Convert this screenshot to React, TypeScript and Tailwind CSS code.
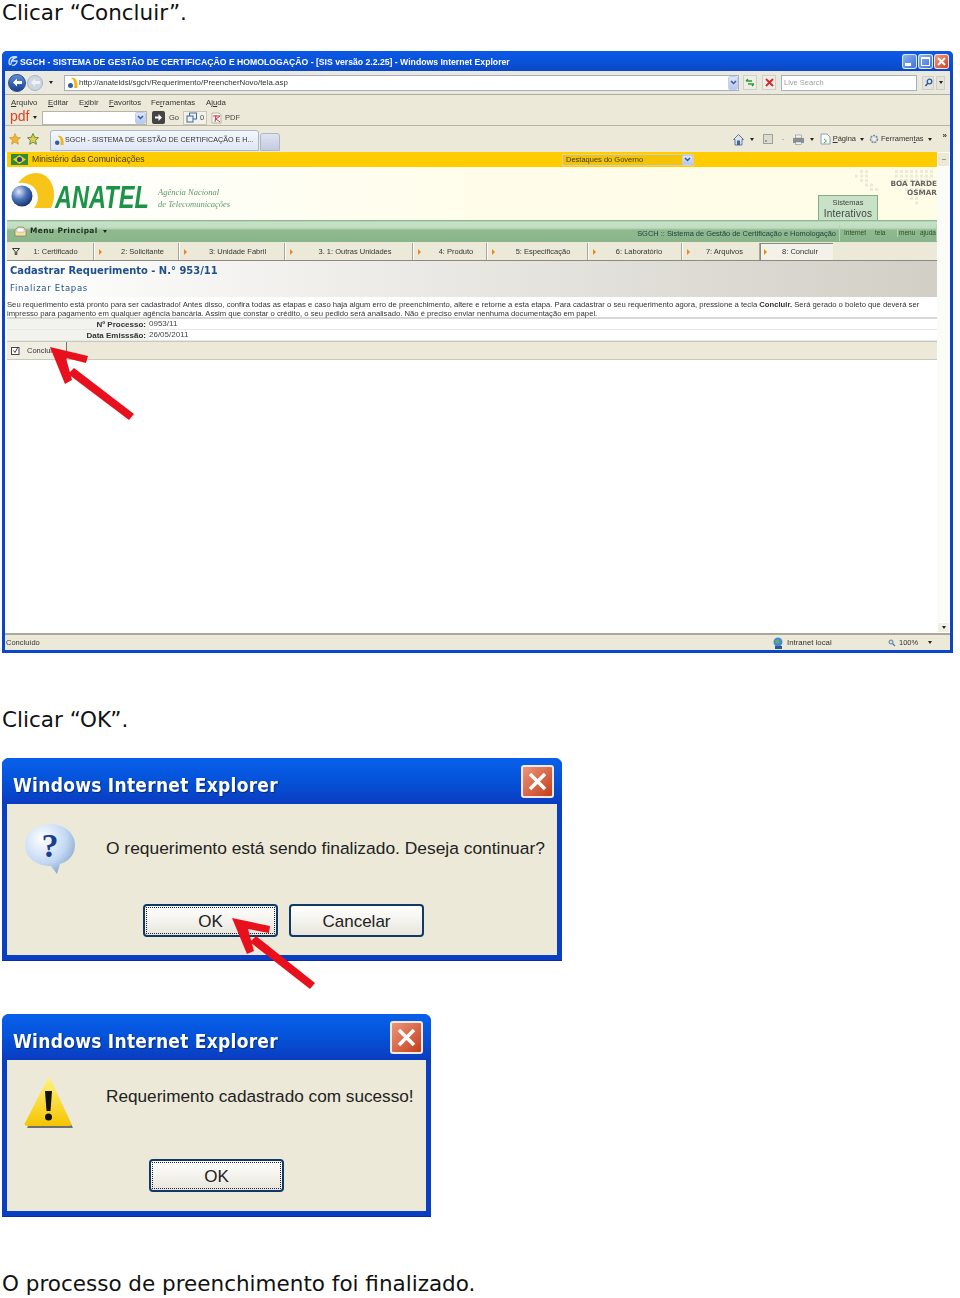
const ui = { fontFamily: '"Liberation Sans", Arial, sans-serif' };

function RedArrow({ className, width, height, points, shaft }: { className: string; width: number; height: number; points: string; shaft: string }) {
	return (
		<svg className={className} width={width} height={height} viewBox={`0 0 ${width} ${height}`}>
			<polygon points={points} fill="#e8101c" />
			<polygon points={shaft} fill="#e8101c" />
		</svg>
	);
}

function LogoIcon({ size = 12 }: { size?: number }) {
	return (
		<svg width={size} height={size} viewBox="0 0 12 12" className="shrink-0">
			<path d="M4 1 C8 0 11 3 10.500 11 L7 11 C8 6 7 3 4 1 Z" fill="#f3b612" />
			<circle cx="3.500" cy="8.500" r="2.500" fill="#2a5fa8" />
		</svg>
	);
}

function WinButton({ kind }: { kind: 'min' | 'max' | 'close' }) {
	const bg =
		kind === 'close'
			? 'bg-gradient-to-br from-[#f09a80] to-[#cf3c18]'
			: 'bg-gradient-to-br from-[#8fb4f0] to-[#3f6fd8]';
	return (
		<div className={`flex items-center justify-center w-[15px] h-[15px] rounded-[3px] border border-white/80 ${bg}`}>
			{kind === 'min' && <div className="w-[6px] h-[3px] bg-white mt-[7px] mr-[3px]" />}
			{kind === 'max' && <div className="w-[9px] h-[9px] border border-white border-t-2" />}
			{kind === 'close' && (
				<svg width="11" height="11" viewBox="0 0 11 11">
					<path d="M2 2 L9 9 M9 2 L2 9" stroke="#fff" strokeWidth="2" />
				</svg>
			)}
		</div>
	);
}

function NavCircle({ faded }: { faded?: boolean }) {
	return (
		<div
			className={`flex items-center justify-center rounded-full border ${
				faded
					? 'w-[16px] h-[16px] bg-[#cfd6e2] border-[#aab4c4]'
					: 'w-[18px] h-[18px] bg-gradient-to-b from-[#5f8fd8] to-[#1a3f92] border-[#2b4a86]'
			}`}
		>
			<svg width="11" height="11" viewBox="0 0 11 11">
				<path d="M1 5.500 L5 1.500 V4 H10 V7 H5 V9.500 Z" fill={faded ? '#eef1f6' : '#fff'} />
			</svg>
		</div>
	);
}

function Caret({ className = '' }: { className?: string }) {
	return <div className={`w-0 h-0 border-x-[2px] border-x-transparent border-t-[3px] border-t-[#222] ${className}`} />;
}

function ComboArrow({ className = '' }: { className?: string }) {
	return (
		<div className={`flex items-center justify-center bg-gradient-to-b from-[#dde6fa] to-[#b4c7ef] border border-[#c2cfe8] rounded-[2px] ${className}`}>
			<svg width="7" height="5" viewBox="0 0 7 5">
				<path d="M1 1 L3.500 3.500 L6 1" stroke="#3a5a9a" strokeWidth="1.500" fill="none" />
			</svg>
		</div>
	);
}

// mapa pontilhado atras do "BOA TARDE"
const mapRows = [
	'...##.....########',
	'..###.....########',
	'...##......######.',
	'....##.....#####..',
	'.....##.....####..',
	'.............###..',
	'.............##...',
	'..............#...',
];

function DotMap() {
	return (
		<svg className="absolute right-[2px] top-[3px]" width="90" height="36" viewBox="0 0 90 36">
			{mapRows.map((row, y) =>
				row.split('').map((c, x) =>
					c === '#' ? <rect key={`${x}-${y}`} x={x * 5} y={y * 4.500} width="3" height="3" fill="#eceadb" /> : null,
				),
			)}
		</svg>
	);
}

const steps = [
	{ label: '2: Solicitante', w: 'w-[85px]', pad: 'pl-[5px]' },
	{ label: '3: Unidade Fabril', w: 'w-[106px]', pad: 'pl-[4px]' },
	{ label: '3. 1: Outras Unidades', w: 'w-[128px]', pad: 'pl-[5px]' },
	{ label: '4: Produto', w: 'w-[74px]', pad: 'pl-[5px]' },
	{ label: '5: Especificação', w: 'w-[101px]', pad: 'pl-[4px]' },
	{ label: '6: Laboratório', w: 'w-[94px]', pad: 'pl-[1px]' },
	{ label: '7: Arquivos', w: 'w-[78px]', pad: 'pl-0' },
];

function BrowserWindow() {
	return (
		<div className="relative w-[951px] h-[602px] ml-[2px] rounded-t-[5px] bg-[#0b46c8] blur-[0.35px]" style={ui}>
			{/* barra de titulo */}
			<div className="flex items-center h-[20px] pl-[5px] pr-[4px] rounded-t-[5px] bg-gradient-to-b from-[#0a5ae8] via-[#0a52d8] to-[#0a48c4]">
				<svg width="12" height="12" viewBox="0 0 12 12" className="shrink-0">
					<path d="M2 7 C2 3 5 1 10 2 C6 3 4 6 4 9 C3 10 2 10 2 7 Z M4 6 H10 C10 9 7 11 5 10" fill="none" stroke="#cfe4ff" strokeWidth="1.300" />
				</svg>
				<span className="ml-[1px] mt-[2px] text-[8.670px] font-bold text-white whitespace-nowrap">
					SGCH - SISTEMA DE GESTÃO DE CERTIFICAÇÃO E HOMOLOGAÇÃO - [SIS versão 2.2.25] - Windows Internet Explorer
				</span>
				<div className="flex gap-[1px] ml-auto">
					<WinButton kind="min" />
					<WinButton kind="max" />
					<WinButton kind="close" />
				</div>
			</div>
			<div className="mx-[3px] h-[579px] bg-white flex flex-col">
				{/* endereco */}
				<div className="flex items-center h-[24px] pl-[3px] bg-[#e9e9df] border-b border-[#b0aea0]">
					<NavCircle />
					<div className="ml-[1px]"><NavCircle faded /></div>
					<Caret className="ml-[6px]" />
					<div className="flex items-center ml-[11px] w-[675px] h-[16px] pl-[2px] bg-white border border-[#a8b0c0]">
						<LogoIcon />
						<span className="text-[7.900px] text-[#333] whitespace-nowrap">http://anateldsl/sgch/Requerimento/PreencherNovo/tela.asp</span>
						<ComboArrow className="ml-auto w-[10px] h-[14px]" />
					</div>
					<div className="flex items-center justify-center ml-[4px] w-[14px] h-[15px] bg-[#eeeee6] border border-[#cfcfc4]">
						<svg width="10" height="9" viewBox="0 0 10 9"><path d="M1 3 H7 M1 3 L3 1 M9 6 H3 M9 6 L7 8" stroke="#2f9a3a" strokeWidth="1.400" fill="none" /></svg>
					</div>
					<div className="flex items-center justify-center ml-[5px] w-[14px] h-[15px] bg-[#eeeee6] border border-[#cfcfc4]">
						<svg width="9" height="9" viewBox="0 0 9 9"><path d="M1 1 L8 8 M8 1 L1 8" stroke="#d8262a" strokeWidth="1.800" /></svg>
					</div>
					<div className="flex items-center ml-[5px] w-[136px] h-[16px] pl-[2px] bg-white border border-[#a8b0c0] text-[7.500px] text-[#a0a0a0]">Live Search</div>
					<div className="flex items-center justify-center ml-[5px] w-[12px] h-[14px] bg-[#e4e4da] border border-[#cfcfc4]">
						<svg width="9" height="9" viewBox="0 0 9 9"><circle cx="5.500" cy="3.500" r="2.300" fill="none" stroke="#2a5aa8" strokeWidth="1.300" /><path d="M4 5 L1.500 8" stroke="#2a5aa8" strokeWidth="1.500" /></svg>
					</div>
					<div className="flex items-center justify-center ml-[2px] w-[9px] h-[14px] bg-[#e4e4da] border border-[#cfcfc4]"><Caret /></div>
				</div>
				{/* menu */}
				<div className="flex items-center h-[15px] pl-[6px] pt-[1px] bg-[#ece9d8] text-[7.800px] text-[#333]">
					<span className="w-[37px]"><u>A</u>rquivo</span>
					<span className="w-[31px]"><u>E</u>ditar</span>
					<span className="w-[30px]">E<u>x</u>ibir</span>
					<span className="w-[42px]"><u>F</u>avoritos</span>
					<span className="w-[55px]">Fe<u>r</u>ramentas</span>
					<span>Aj<u>u</u>da</span>
				</div>
				{/* pdf */}
				<div className="flex items-center h-[16px] pl-[5px] bg-[#ece9d8] border-b border-[#b8b6a8] text-[7.500px] text-[#444]">
					<span className="text-[14px] leading-none font-light text-[#d8452a] w-[23px] -mt-[3px]">pdf</span>
					<Caret />
					<div className="flex items-center justify-end ml-[5px] w-[105px] h-[14px] bg-white border border-[#b4b4a8]">
						<ComboArrow className="w-[11px] h-[12px]" />
					</div>
					<div className="flex items-center justify-center ml-[5px] w-[13px] h-[13px] bg-[#444] rounded-[2px]">
						<svg width="9" height="9" viewBox="0 0 9 9"><path d="M1 3.500 H4.500 V1 L8 4.500 L4.500 8 V5.500 H1 Z" fill="#fff" /></svg>
					</div>
					<span className="ml-[4px] w-[14px]">Go</span>
					<div className="flex items-center w-[24px] h-[14px] pl-[2px] bg-[#f4f2e8] border border-[#c8c6b8]">
						<svg width="11" height="11" viewBox="0 0 11 11"><rect x="3.500" y="1" width="7" height="6" fill="none" stroke="#3a6aa8" /><rect x="1" y="4" width="6" height="6" fill="#f4f2e8" stroke="#3a6aa8" /></svg>
						<span className="ml-[3px]">0</span>
					</div>
					<svg width="11" height="12" viewBox="0 0 11 12" className="ml-[4px]">
						<path d="M1 1 H8 L10 3 V11 H1 Z" fill="#fff" stroke="#b8b0a8" />
						<path d="M2 4 H9 L5 7 L9 10 M5 3 L4 10" stroke="#d8302a" fill="none" />
					</svg>
					<span className="ml-[3px]">PDF</span>
				</div>
				{/* abas */}
				<div className="flex items-end h-[26px] pl-[4px] bg-[#ece9d8] text-[7.500px] text-[#333]">
					<div className="flex self-center items-center gap-[6px]">
						<svg width="12" height="12" viewBox="0 0 12 12"><path d="M6 0.500 L7.700 4.300 L11.500 4.700 L8.600 7.300 L9.400 11.300 L6 9.200 L2.600 11.300 L3.400 7.300 L0.500 4.700 L4.300 4.300 Z" fill="#f2b430" stroke="#b8842a" strokeWidth="0.500" /></svg>
						<svg width="12" height="12" viewBox="0 0 12 12"><path d="M6 0.500 L7.700 4.300 L11.500 4.700 L8.600 7.300 L9.400 11.300 L6 9.200 L2.600 11.300 L3.400 7.300 L0.500 4.700 L4.300 4.300 Z" fill="#e0cc50" stroke="#4f8a3a" strokeWidth="0.900" /></svg>
					</div>
					<div className="flex items-center ml-[11px] mb-[1px] w-[209px] h-[21px] pl-[3px] bg-gradient-to-b from-[#f4f7fc] to-[#dfe6f4] border border-[#aab6cc] rounded-t-[3px] whitespace-nowrap overflow-hidden">
						<LogoIcon size={11} />
						<span className="text-[7.150px]">SGCH - SISTEMA DE GESTÃO DE CERTIFICAÇÃO E H...</span>
					</div>
					<div className="ml-[1px] mb-[1px] w-[20px] h-[18px] bg-gradient-to-b from-[#dfe4f0] to-[#c3cbe0] border border-[#aab6cc] rounded-t-[3px]" />
					<div className="flex self-center items-center ml-auto pr-[3px] text-[7.500px]">
						<svg width="13" height="13" viewBox="0 0 13 13"><path d="M1.500 6.500 L6.500 1.500 L11.500 6.500 H10 V12 H3 V6.500 Z" fill="#dfe4ea" stroke="#5a7a9a" /><rect x="5" y="7.500" width="3" height="4.500" fill="#3a6a9a" /></svg>
						<Caret className="ml-[5px]" />
						<svg width="10" height="10" viewBox="0 0 10 10" className="ml-[9px]"><rect x="0.500" y="0.500" width="9" height="9" fill="#dcdcd0" stroke="#a0a094" /><circle cx="3" cy="7" r="1" fill="#8a8a80" /></svg>
						<div className="w-[2px] h-[1px] bg-[#bbb] ml-[9px]" />
						<svg width="13" height="11" viewBox="0 0 13 11" className="ml-[8px]"><rect x="1" y="4" width="11" height="5" fill="#8a8f98" /><rect x="3.500" y="1" width="6" height="3" fill="#f4f4f4" stroke="#777" strokeWidth="0.500" /><rect x="3.500" y="8" width="6" height="2.500" fill="#f4f4f4" stroke="#777" strokeWidth="0.500" /></svg>
						<Caret className="ml-[5px]" />
						<svg width="11" height="12" viewBox="0 0 11 12" className="ml-[6px]"><path d="M1 1 H7 L10 4 V11 H1 Z" fill="#f8f8f4" stroke="#8aa0c0" /><path d="M4 6 L6.500 8 L4 10" fill="none" stroke="#6a9a3a" /></svg>
						<span className="ml-[2px]"><u>P</u>ágina</span>
						<Caret className="ml-[4px]" />
						<svg width="12" height="12" viewBox="0 0 12 12" className="ml-[4px]"><circle cx="6" cy="6" r="3.500" fill="#d4dbe2" stroke="#7a8a98" strokeWidth="1.500" strokeDasharray="2 1" /><circle cx="6" cy="6" r="1.500" fill="#f4f4f4" /></svg>
						<span className="ml-[1px]">Ferramen<u>t</u>as</span>
						<Caret className="ml-[4px]" />
						<span className="ml-[11px] mb-[7px] font-bold text-[8px] leading-none">»</span>
					</div>
				</div>
				<div className="flex flex-1 pl-[2px]">
					<div className="flex flex-col w-[930px] shrink-0">
						{/* ministerio */}
						<div className="flex items-center h-[15px] pl-[4px] bg-[#ffcc00] text-[8px] text-[#3a3a20]">
							<svg width="17" height="11" viewBox="0 0 17 11"><rect width="17" height="11" fill="#2f8a3c" /><path d="M8.500 1 L15 5.500 L8.500 10 L2 5.500 Z" fill="#e8d020" /><circle cx="8.500" cy="5.500" r="2.500" fill="#24408c" /></svg>
							<span className="ml-[4px] text-[8.650px] w-[114px] whitespace-nowrap">Ministério das Comunicações</span>
							<div className="flex items-center ml-[416px] w-[132px] h-[12px] pl-[3px] bg-[#f5c400] border border-[#d4d0c0] text-[7.500px]">
								Destaques do Governo
								<ComboArrow className="ml-auto w-[11px] h-[10px]" />
							</div>
						</div>
						{/* cabecalho */}
						<div className="relative flex h-[53px] bg-gradient-to-r from-white via-[#fffdea] to-[#fffde6]">
							<DotMap />
							<svg width="46" height="44" viewBox="0 0 46 44" className="ml-[3px] mt-[4px] shrink-0">
								<path d="M8 12 C18 -2 38 -2 43 16 C45 24 44 32 41 37 L24 37 C32 28 28 10 8 12 Z" fill="#f7c51a" />
								<defs>
									<radialGradient id="ball" cx="35%" cy="30%" r="75%">
										<stop offset="0" stopColor="#dfe8f6" />
										<stop offset="0.500" stopColor="#4a74ba" />
										<stop offset="1" stopColor="#14306e" />
									</radialGradient>
								</defs>
								<circle cx="12" cy="25" r="10.500" fill="url(#ball)" />
							</svg>
							<div className="w-[93px] mt-[14px] -ml-[1px] shrink-0">
								<span className="block text-[31px] leading-[34px] font-bold italic text-[#1c9447] whitespace-nowrap scale-x-[0.76] origin-left">ANATEL</span>
							</div>
							<div className="mt-[19px] ml-[10px] text-[8.500px] leading-[12px] italic text-[#5a9a6a] whitespace-nowrap" style={{ fontFamily: '"Liberation Serif", serif' }}>
								Agência Nacional
								<br />
								de Telecomunicações
							</div>
							<div className="ml-auto flex items-end">
								<div className="flex flex-col items-center justify-end w-[60px] h-[25px] mr-[59px] bg-[#c8e2c8] border border-[#86ae86] border-b-0 text-[#444]">
									<span className="text-[7.500px] leading-[9px]">Sistemas</span>
									<span className="text-[10px] leading-[13px] tracking-[0.2px]">Interativos</span>
								</div>
							</div>
							<div className="absolute right-0 top-[12px] text-right text-[7.300px] leading-[9px] font-bold text-[#666]" style={{ fontFamily: '"DejaVu Sans", sans-serif' }}>
								BOA TARDE
								<br />
								OSMAR
							</div>
						</div>
						{/* menu principal */}
						<div className="flex h-[22px] items-center pl-[7px] bg-[linear-gradient(#7fa87f_0,#c5e2c8_2px,#c0dcc0_8px,#8fb98f_10px,#8ab48a_100%)] text-[7.500px] text-[#244]">
							<svg width="13" height="11" viewBox="0 0 13 11"><path d="M1 4 L4 1 H9 L12 4 V10 H1 Z" fill="#f4e4a8" stroke="#8a7a4a" strokeWidth="0.700" /><rect x="3" y="2" width="7" height="4" fill="#fff" stroke="#888" strokeWidth="0.400" /></svg>
							<span className="ml-[3px] text-[7.400px] font-bold text-[#1f2f1f] tracking-[0.4px]" style={{ fontFamily: '"DejaVu Sans", sans-serif' }}>Menu Principal</span>
							<Caret className="ml-[5px]" />
							<span className="ml-auto mt-[5px] text-[#244] text-[7.450px] whitespace-nowrap">SGCH :: Sistema de Gestão de Certificação e Homologação</span>
							<div className="flex ml-[3px] mt-[3px] h-[16px] items-center border-l border-r border-[#b6d2b6] text-[6.500px] text-[#2f4a2f]">
								<span className="ml-[4px] w-[31px]">Internet</span>
								<span className="w-[22px]">tela</span>
								<span className="w-[23px] pl-[1px] border-l border-[#b6d2b6]">menu</span>
								<span className="w-[16px]">ajuda</span>
							</div>
						</div>
						{/* etapas */}
						<div className="flex h-[19px] pt-[1px] bg-[#ece9d8] border-b border-[#8a8a80] text-[7.500px] text-[#333]">
							<div className="flex items-center w-[87px] h-[17px] pl-[5px] border-r border-[#a8a698]">
								<svg width="8" height="7" viewBox="0 0 8 7"><path d="M0.500 0.500 H7.500 L4.800 3.500 V6.500 H3.200 V3.500 Z" fill="none" stroke="#333" /></svg>
								<span className="flex-1 text-center pr-[2px]">1: Certificado</span>
							</div>
							{steps.map((s) => (
								<div key={s.label} className={`flex items-center ${s.w} h-[17px] pl-[4px] border-l border-l-white border-r border-r-[#a8a698]`}>
									<div className="w-0 h-0 border-y-[3px] border-y-transparent border-l-[3px] border-l-[#e88a1a]" />
									<span className={`flex-1 text-center ${s.pad}`}>{s.label}</span>
								</div>
							))}
							<div className="flex items-center w-[73px] h-[17px] pl-[3px] bg-[#f4f2e8] border-l border-[#8a8a80] border-t border-t-[#8a8a80]">
								<div className="w-0 h-0 border-y-[3px] border-y-transparent border-l-[3px] border-l-[#e88a1a]" />
								<span className="flex-1 text-center">8: Concluir</span>
							</div>
						</div>
						{/* titulo da pagina */}
						<div className="h-[36px] pl-[3px] pt-[2px] bg-gradient-to-r from-white to-[#d2cfc6] text-[#1f4f8c] font-bold" style={{ fontFamily: '"DejaVu Sans", sans-serif' }}>
							<div className="text-[9.950px] leading-[16px] whitespace-nowrap">Cadastrar Requerimento - N.° 953/11</div>
							<div className="mt-[2px] text-[8.500px] leading-[14px] font-normal tracking-[0.7px] whitespace-nowrap">Finalizar Etapas</div>
						</div>
						<div className="h-[22px] pt-[3px] border-b-2 border-[#d8d8d4] text-[7.680px] leading-[9px] text-[#333] whitespace-nowrap">
							<div>
								Seu requerimento está pronto para ser cadastrado! Antes disso, confira todas as etapas e caso haja algum erro de preenchimento, altere e retorne a esta etapa. Para cadastrar o seu requerimento agora, pressione a tecla <b>Concluir.</b> Será gerado o boleto que deverá ser
							</div>
							<div>
								impresso para pagamento em qualquer agência bancária. Assim que constar o crédito, o seu pedido será analisado. Não é preciso enviar nenhuma documentação em papel.
							</div>
						</div>
						{[
							['Nº Processo:', '0953/11'],
							['Data Emisssão:', '26/05/2011'],
						].map(([k, v]) => (
							<div key={k} className="flex h-[11px] items-center border-b border-[#e8e8e4] text-[8px] text-[#444]">
								<div className="w-[142px] h-full pr-[3px] text-right font-bold leading-[11px] bg-[#f2f2ee] text-[#333]">{k}</div>
								<div>{v}</div>
							</div>
						))}
						<div className="flex h-[19px] bg-[#ece9d8] border-y border-[#c8c8bc] text-[7.500px] text-[#333]">
							<div className="flex items-center w-[60px] pl-[4px] border-r border-[#777] bg-[#f0eee2]">
								<svg width="9" height="9" viewBox="0 0 9 9"><rect x="0.500" y="1.500" width="7.500" height="7" fill="#fff" stroke="#444" /><path d="M2.500 4.500 L4 6.500 L6.500 2" stroke="#444" fill="none" /></svg>
								<span className="ml-[7px]">Concluir</span>
							</div>
						</div>
						<div className="flex-1 bg-white" />
					</div>
					{/* barra de rolagem */}
					<div className="flex flex-1 flex-col justify-between bg-[#fbfbf8]">
						<div className="h-[15px] bg-[#ece9d8] border border-white flex items-center justify-center"><div className="w-[4px] h-[1px] bg-[#999]" /></div>
						<div className="h-[11px] bg-[#f0efe6] border border-white flex items-center justify-center"><Caret /></div>
					</div>
				</div>
				{/* status */}
				<div className="flex items-center h-[17px] bg-[#ece9d8] border-t-2 border-[#aca899] pl-[1px] text-[7.500px] text-[#333]">
					<span>Concluído</span>
					<div className="flex items-center h-full ml-auto">
						<svg width="12" height="12" viewBox="0 0 12 12"><circle cx="6" cy="5" r="4.500" fill="#4a8ad0" /><path d="M3 3 H7 V6 H4 Z" fill="#6ab04a" /><rect x="3" y="9" width="7" height="3" fill="#2a5a9a" /></svg>
						<span className="ml-[3px] w-[101px] text-[7.800px]">Intranet local</span>
						<svg width="8" height="8" viewBox="0 0 8 8"><circle cx="3" cy="3" r="2" fill="#cfe0f4" stroke="#5a7a9a" /><path d="M4.500 4.500 L7 7" stroke="#5a7a9a" strokeWidth="1.300" /></svg>
						<span className="ml-[3px] w-[29px]">100%</span>
						<Caret className="mr-[18px]" />
					</div>
				</div>
			</div>
		</div>
	);
}

function DialogButton({ label, focused, className }: { label: string; focused?: boolean; className: string }) {
	return (
		<div className={`flex items-center justify-center h-[33px] p-[1px] rounded-[4px] border-2 border-[#0f3a68] bg-gradient-to-b from-white to-[#e8e6dc] text-[17px] text-[#222] ${className}`} style={ui}>
			<div className={`flex items-center justify-center w-full h-full pt-[3px] ${focused ? 'border border-dotted border-[#223]' : ''}`}>{label}</div>
		</div>
	);
}

function Dialog({ className, children }: { className: string; children: React.ReactNode }) {
	return (
		<div className={`ml-[2px] h-[203px] rounded-t-[7px] bg-[#0a3fc4] shadow-[inset_0_-1px_0_#082f9a] ${className}`}>
			<div className="flex items-center h-[46px] pl-[11px] pr-[8px] rounded-t-[7px] bg-gradient-to-b from-[#0a60ec] via-[#0452d8] to-[#0a3cc0]">
				<span className="mt-[8px] w-[265px] text-[20px] font-bold text-white tracking-[0.3px] [text-shadow:1px_1px_1px_#0a2a70] whitespace-nowrap scale-x-[0.855] origin-left" style={{ fontFamily: '"DejaVu Sans", sans-serif' }}>
					Windows Internet Explorer
				</span>
				<div className="flex items-center justify-center ml-auto w-[33px] h-[33px] rounded-[3px] border-2 border-[#f2e8e4] bg-gradient-to-br from-[#ec9478] to-[#c23c14]">
					<svg width="21" height="21" viewBox="0 0 21 21">
						<path d="M3 3 L18 18 M18 3 L3 18" stroke="#fff" strokeWidth="3.500" />
					</svg>
				</div>
			</div>
			<div className="mx-[5px] h-[151px] bg-[#ece9d8]">{children}</div>
		</div>
	);
}

function QuestionIcon() {
	return (
		<svg width="52" height="52" viewBox="0 0 52 52" className="shrink-0">
			<defs>
				<radialGradient id="q" cx="35%" cy="30%" r="80%">
					<stop offset="0" stopColor="#ffffff" />
					<stop offset="0.600" stopColor="#c2d8f4" />
					<stop offset="1" stopColor="#7f9fc8" />
				</radialGradient>
			</defs>
			<path d="M26 1 C40 1 51 10 51 22 C51 32 44 39 36 41 L33 51 L27 43 C12 43 1 34 1 22 C1 10 12 1 26 1 Z" fill="url(#q)" />
			<text x="26" y="34" textAnchor="middle" fontSize="34" fontWeight="700" fill="#1a3f8c" fontFamily="Liberation Serif, serif">?</text>
		</svg>
	);
}

function WarningIcon() {
	return (
		<svg width="50" height="52" viewBox="0 0 50 52" className="shrink-0">
			<defs>
				<linearGradient id="w" x1="0" y1="0" x2="0" y2="1">
					<stop offset="0" stopColor="#fff27a" />
					<stop offset="1" stopColor="#f5c400" />
				</linearGradient>
			</defs>
			<path d="M3 50 H49 L26 5 Z" fill="#3a3a50" opacity="0.700" />
			<path d="M23 2 C24 0 26 0 27 2 L47 45 C48 47 47 48 45 48 H4 C2 48 0 47 1 45 Z" fill="url(#w)" />
			<path d="M21 13 H28 L26.500 33 H22.500 Z" fill="#111" />
			<circle cx="24.500" cy="39" r="3.500" fill="#111" />
		</svg>
	);
}

export default function App() {
	const caption = 'text-[21.500px] leading-[24px] text-[#111]';
	const font = { fontFamily: '"DejaVu Sans", Verdana, sans-serif' };
	return (
		<div className="relative w-[960px] h-[1298px] bg-white overflow-hidden" style={font}>
			<div className={`pt-[1px] pl-[2px] ${caption}`}>Clicar “Concluir”.</div>
			<div className="mt-[26px]">
				<BrowserWindow />
			</div>
			<div className={`mt-[55px] pl-[2px] ${caption}`}>Clicar “OK”.</div>
			<Dialog className="mt-[26px] w-[560px]">
				<div className="flex pl-[17px] pt-[19px]">
					<QuestionIcon />
					<span className="ml-[30px] mt-[13px] text-[17.400px] leading-[24px] text-[#222] whitespace-nowrap" style={ui}>O requerimento está sendo finalizado. Deseja continuar?</span>
				</div>
				<div className="flex mt-[29px] ml-[136px] gap-[11px]">
					<DialogButton label="OK" focused className="w-[135px]" />
					<DialogButton label="Cancelar" className="w-[135px]" />
				</div>
			</Dialog>
			<Dialog className="mt-[53px] w-[429px]">
				<div className="flex pl-[17px] pt-[18px]">
					<WarningIcon />
					<span className="ml-[32px] mt-[6px] text-[17.200px] leading-[24px] text-[#222] whitespace-nowrap" style={ui}>Requerimento cadastrado com sucesso!</span>
				</div>
				<div className="flex mt-[29px] ml-[142px]">
					<DialogButton label="OK" focused className="w-[135px]" />
				</div>
			</Dialog>
			<div className={`mt-[55px] pl-[2px] ${caption}`}>O processo de preenchimento foi finalizado.</div>

			{/* setas vermelhas */}
			<RedArrow
				className="absolute left-[48px] top-[345px]"
				width={90}
				height={76}
				points="2,2 40,11 38,18 18,13 24,35 17,39"
				shaft="26,23 86,69 81,75 20,29"
			/>
			<RedArrow
				className="absolute left-[230px] top-[916px]"
				width={88}
				height={74}
				points="2,2 40,10 39,17 18,13 24,35 17,38"
				shaft="26,20 85,67 80,73 20,26"
			/>
		</div>
	);
}
